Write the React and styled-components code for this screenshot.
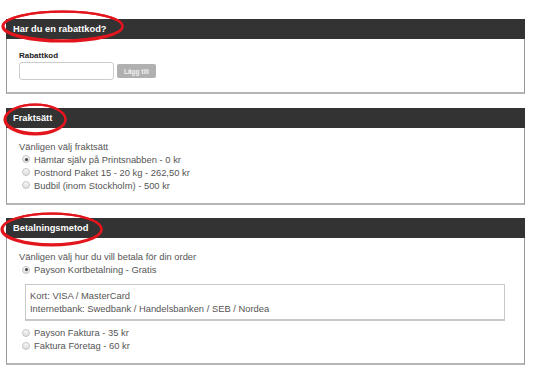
import React from "react";
import styled, { createGlobalStyle } from "styled-components";

const GlobalStyle = createGlobalStyle`
  body {
    margin: 0;
    background: #fff;
    font-family: "Liberation Sans", Arial, sans-serif;
  }
`;

function App() {
  return (
    <Wrapper>
      <GlobalStyle />
      <Panel>
        <Mark left={-5} top={-9} w={123} h={33} />
        <Header>Har du en rabattkod?</Header>
        <Body>
          <Label>Rabattkod</Label>
          <CodeRow>
            <CodeInput type="text" />
            <AddButton>Lägg till</AddButton>
          </CodeRow>
        </Body>
      </Panel>

      <Panel>
        <Mark left={-3} top={-5} w={64} h={33} />
        <Header>Fraktsätt</Header>
        <Body>
          <Text>Vänligen välj fraktsätt</Text>
          <Option checked>Hämtar själv på Printsnabben - 0 kr</Option>
          <Option>Postnord Paket 15 - 20 kg - 262,50 kr</Option>
          <Option>Budbil (inom Stockholm) - 500 kr</Option>
        </Body>
      </Panel>

      <Panel>
        <Mark left={-6} top={-6} w={103} h={35} />
        <Header>Betalningsmetod</Header>
        <Body>
          <Text>Vänligen välj hur du vill betala för din order</Text>
          <Option checked>Payson Kortbetalning - Gratis</Option>
          <InfoBox>
            <div>Kort: VISA / MasterCard</div>
            <div>Internetbank: Swedbank / Handelsbanken / SEB / Nordea</div>
          </InfoBox>
          <Option>Payson Faktura - 35 kr</Option>
          <Option>Faktura Företag - 60 kr</Option>
        </Body>
      </Panel>
    </Wrapper>
  );
}

function Mark({ left, top, w, h }) {
  return (
    <MarkSvg left={left} top={top} width={w} height={h} viewBox={`0 0 ${w} ${h}`}>
      <ellipse cx={w / 2} cy={h / 2} rx={w / 2 - 1.5} ry={h / 2 - 1.5} />
      <ellipse cx={w / 2 + 0.5} cy={h / 2 - 0.5} rx={w / 2 - 2} ry={h / 2 - 2.2} />
    </MarkSvg>
  );
}

function Option({ checked, children }) {
  return (
    <OptionRow>
      <Radio checked={checked} />
      <span>{children}</span>
    </OptionRow>
  );
}

const Wrapper = styled.main`
  width: 519px;
  padding: 19px 0 0 6px;
  display: flex;
  flex-direction: column;
  gap: 13.5px;
`;

const Panel = styled.section`
  position: relative;
`;

const MarkSvg = styled.svg`
  position: absolute;
  left: ${({ left }) => left}px;
  top: ${({ top }) => top}px;
  z-index: 2;
  overflow: visible;
  fill: none;
  stroke: #e3151d;
  stroke-width: 2.2;
`;

const Header = styled.h2`
  margin: 0;
  height: 20px;
  line-height: 20px;
  padding-left: 7px;
  background: #333;
  color: #fff;
  font-size: 9.3px;
  font-weight: bold;
`;

const Body = styled.div`
  border: 1px solid #999;
  border-top: none;
  border-bottom: 2px solid #b5b5b5;
  padding: 12px 12px 11px 12px;
  color: #555;
  font-size: 9.4px;
  line-height: 13px;
`;

const Label = styled.div`
  color: #222;
  font-size: 8px;
  font-weight: bold;
  line-height: 9px;
  margin-bottom: 2px;
`;

const CodeRow = styled.div`
  display: flex;
  align-items: center;
  gap: 3px;
  margin-bottom: 1px;
`;

const CodeInput = styled.input`
  box-sizing: border-box;
  width: 95px;
  height: 18px;
  border: 1px solid #ccc;
  border-radius: 3px;
  margin: 0;
  padding: 0 4px;
`;

const AddButton = styled.button`
  height: 14px;
  padding: 0 7px;
  border: none;
  border-radius: 2px;
  background: #b0b0b0;
  color: #f2f2f2;
  font-family: "Liberation Sans", Arial, sans-serif;
  font-size: 6.5px;
  font-weight: bold;
`;

const Text = styled.div``;

const OptionRow = styled.div`
  display: flex;
  align-items: center;
  gap: 4px;
  padding-left: 3px;
`;

const Radio = styled.span`
  position: relative;
  width: 8px;
  height: 8px;
  border-radius: 50%;
  border: 1px solid #c4c4c4;
  background: linear-gradient(#fafafa, #dcdcdc);
  box-sizing: border-box;
  flex: none;
  &::after {
    content: "";
    display: ${({ checked }) => (checked ? "block" : "none")};
    position: absolute;
    left: 1.5px;
    top: 1.5px;
    width: 3px;
    height: 3px;
    border-radius: 50%;
    background: #444;
  }
`;

const InfoBox = styled.div`
  margin: 8px 7px 5px 6px;
  padding: 4px 5px 4px 4px;
  border: 1px solid #c8c8c8;
  border-bottom-width: 2px;
`;

export default App;
